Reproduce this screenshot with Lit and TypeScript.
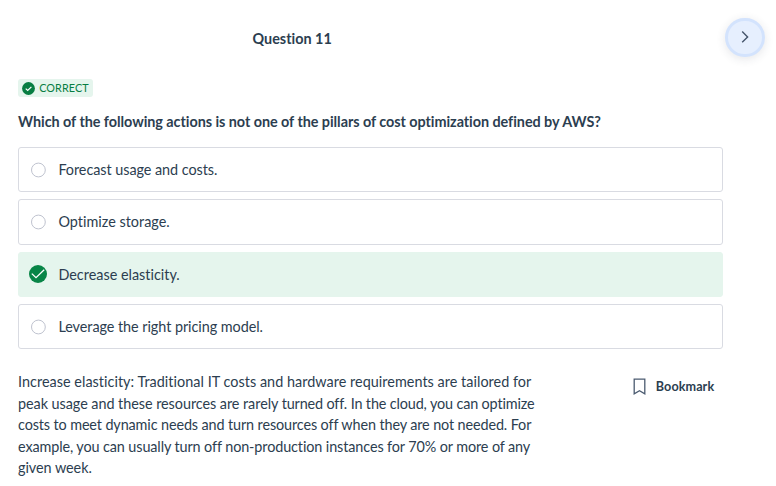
import { LitElement, html, css } from "lit";
import { customElement, property } from "lit/decorators.js";
import { classMap } from "lit/directives/class-map.js";
import { styleMap } from "lit/directives/style-map.js";

@customElement("answer-option")
class AnswerOption extends LitElement {
  @property({ type: Boolean }) selected = false;
  @property() label = "";
  @property({ type: Number }) tracking = 0;

  static styles = css`
    :host { display: block; }
    .option {
      box-sizing: border-box;
      display: flex;
      align-items: center;
      height: 45.2px;
      border: 1px solid #d9dbe2;
      border-radius: 3px;
      padding-left: 9px;
      background: #fff;
    }
    .correct { border-color: #e5f5ed; background: #e5f5ed; }
    .mark { width: 20px; height: 20px; flex: none; margin-right: 10.4px; }
    .mark svg { display: block; }
    .label { font-size: 14.4px; line-height: 21.6px; }
  `;

  render() {
    return html`<div class=${classMap({ option: true, correct: this.selected })}>
      <span class="mark">
        ${this.selected
          ? html`<svg width="20" height="20" viewBox="0 0 20 20" fill="none">
              <circle cx="10" cy="10" r="9" fill="#088547" />
              <path d="M3.8 9.6 8 13.7 16.2 5.8" stroke="#fff" stroke-width="1.3" />
            </svg>`
          : html`<svg width="20" height="20" viewBox="0 0 20 20" fill="none">
              <circle cx="10.4" cy="10" r="6.9" fill="#fff" stroke="#bfc3cf" />
            </svg>`}
      </span>
      <span class="label" style=${styleMap({ letterSpacing: `${this.tracking}px` })}>${this.label}</span>
    </div>`;
  }
}

@customElement("app-root")
class AppRoot extends LitElement {
  private options = [
    { label: "Forecast usage and costs.", selected: false, tracking: -0.05 },
    { label: "Optimize storage.", selected: false, tracking: 0.02 },
    { label: "Decrease elasticity.", selected: true, tracking: 0 },
    { label: "Leverage the right pricing model.", selected: false, tracking: -0.05 },
  ];

  private explanation = [
    [{ text: "Increase elasticity: Traditional IT costs and hardware requirements are tailored for", tracking: 0.034 }],
    [
      { text: "peak usage and these resources are rarely ", tracking: -0.045 },
      { text: "turned off. In the cloud, you can optimize", tracking: -0.14 },
    ],
    [{ text: "costs to meet dynamic needs and turn resources off when they are not needed. For", tracking: -0.113 }],
    [{ text: "example, you can usually turn off non-production instances for 70% or more of any", tracking: -0.104 }],
    [{ text: "given week.", tracking: -0.05 }],
  ];

  static styles = css`
    :host {
      display: block;
      box-sizing: border-box;
      height: 486px;
      overflow: hidden;
      background: #fff;
      color: #2c3e50;
      font-family: Lato, "Liberation Sans", sans-serif;
      font-size: 14.4px;
      line-height: 21.6px;
      font-variant-ligatures: none;
    }
    .header {
      display: flex;
      align-items: center;
      justify-content: space-between;
      height: 40px;
      padding: 17px 11.2px 0 252.5px;
    }
    .title { font-weight: 700; margin-top: 3px; }
    .next {
      box-sizing: border-box;
      display: grid;
      place-items: center;
      width: 39.6px;
      height: 39.6px;
      margin-top: 0.6px;
      padding: 0;
      border: 3px solid #d3e3fd;
      border-radius: 50%;
      background: #e6effe;
      box-shadow: 0 2px 10px rgba(40, 50, 70, 0.12);
    }
    .main { width: 705px; padding: 22px 0 0 18px; }
    .tag {
      box-sizing: border-box;
      display: flex;
      align-items: center;
      gap: 4.2px;
      width: 75px;
      height: 18px;
      padding-left: 4px;
      border-radius: 3px;
      background: #e5f5ed;
      color: #077d42;
      font-size: 10.8px;
      line-height: 18px;
      letter-spacing: 0.1px;
    }
    .tag svg { flex: none; }
    .question {
      margin: 14px 0 15px;
      font-size: 14.4px;
      font-weight: 700;
      line-height: 21px;
      letter-spacing: -0.046px;
    }
    .options { display: flex; flex-direction: column; gap: 7.2px; }
    .footer { display: flex; justify-content: space-between; padding: 21.6px 8.8px 0 0; }
    .explanation { width: 522px; }
    .line { white-space: pre; }
    .bookmark {
      display: flex;
      align-items: center;
      gap: 10px;
      height: 21.6px;
      margin-top: 5px;
      font-size: 12.6px;
      font-weight: 700;
      letter-spacing: 0.08px;
    }
  `;

  render() {
    return html`
      <div class="header">
        <span class="title">Question 11</span>
        <button class="next" aria-label="Next question">
          <svg width="16" height="16" viewBox="0 0 16 16" fill="none">
            <path d="M5.2 2.6 10.6 7.9 5.2 13.2" stroke="#44546a" stroke-width="1.4" />
          </svg>
        </button>
      </div>
      <div class="main">
        <div class="tag">
          <svg width="13" height="13" viewBox="0 0 13 13" fill="none">
            <circle cx="6.5" cy="6.5" r="6.4" fill="#077d42" />
            <path d="M3.7 6.6 5.7 8.5 9.4 4.8" stroke="#fff" stroke-width="1.2" />
          </svg>
          <span>CORRECT</span>
        </div>
        <h2 class="question">Which of the following actions is not one of the pillars of cost optimization defined by AWS?</h2>
        <div class="options">
          ${this.options.map(
            (o) => html`<answer-option .label=${o.label} .selected=${o.selected} .tracking=${o.tracking}></answer-option>`,
          )}
        </div>
        <div class="footer">
          <div class="explanation">
            ${this.explanation.map(
              (line) => html`<div class="line">${line.map(
                (part) => html`<span style=${styleMap({ letterSpacing: `${part.tracking}px` })}>${part.text}</span>`,
              )}</div>`,
            )}
          </div>
          <div class="bookmark">
            <svg width="13" height="17" viewBox="0 0 13 17" fill="none">
              <path d="M1.2 1.2H11.8V15.8L6.5 12.8 1.2 15.8Z" stroke="#4b5b70" stroke-width="1.3" />
            </svg>
            <span>Bookmark</span>
          </div>
        </div>
      </div>
    `;
  }
}
